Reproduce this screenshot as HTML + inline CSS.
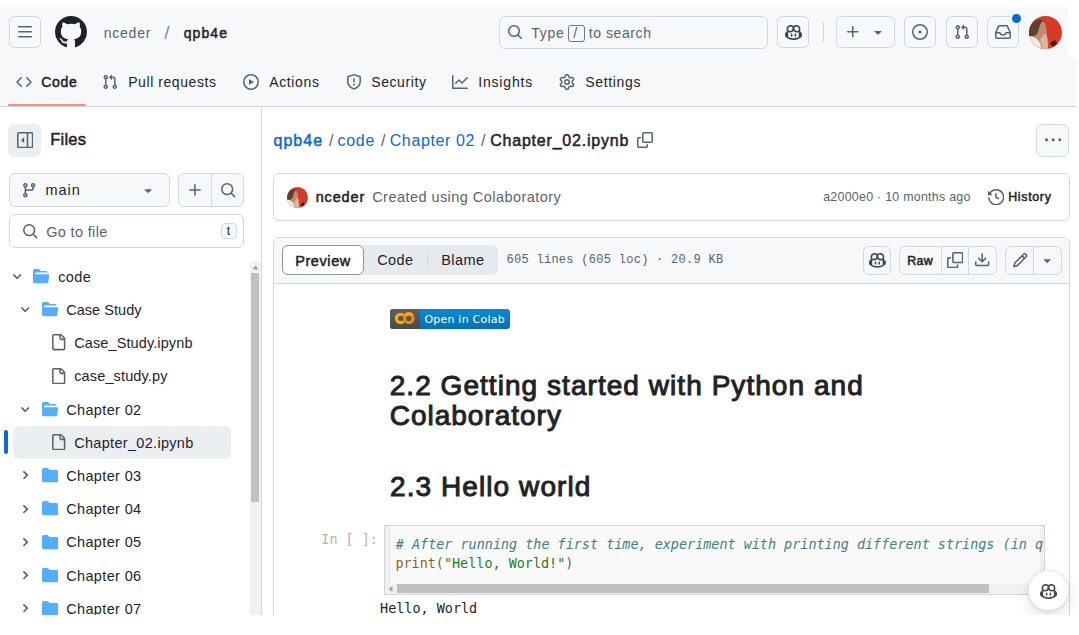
<!DOCTYPE html>
<html lang="en"><head><meta charset="utf-8"><title>qpb4e/code/Chapter 02/Chapter_02.ipynb at main · nceder/qpb4e</title>
<style>
html,body{margin:0;padding:0}body{width:1079px;height:635px;overflow:hidden;background:#fff;position:relative;font-family:"Liberation Sans",sans-serif}
.a{position:absolute;display:block}.t{white-space:pre}
</style></head>
<body>
<header>
<div class="a" style="left:0px;top:0px;width:1079px;height:106px;background:#f6f8fa;"></div>
<div class="a" style="left:0px;top:106px;width:1079px;height:1px;background:#d1d9e0;"></div>
<div class="a" style="left:8.5px;top:16px;width:32px;height:32px;border:1px solid #d1d9e0;border-radius:6px;box-sizing:border-box;"></div>
<svg class="a" style="left:16.5px;top:24px" width="16" height="16" viewBox="0 0 16 16" fill="#59636e"><path d="M1 2.75A.75.75 0 0 1 1.75 2h12.5a.75.75 0 0 1 0 1.5H1.75A.75.75 0 0 1 1 2.75Zm0 5A.75.75 0 0 1 1.75 7h12.5a.75.75 0 0 1 0 1.5H1.75A.75.75 0 0 1 1 7.75ZM1.75 12h12.5a.75.75 0 0 1 0 1.5H1.75a.75.75 0 0 1 0-1.5Z"/></svg>
<svg class="a" style="left:55px;top:16px" width="32" height="32" viewBox="0 0 16 16" fill="#1f2328"><path d="M8 0c4.42 0 8 3.58 8 8a8.013 8.013 0 0 1-5.45 7.59c-.4.08-.55-.17-.55-.38 0-.27.01-1.13.01-2.2 0-.75-.25-1.23-.54-1.48 1.78-.2 3.65-.88 3.65-3.95 0-.88-.31-1.59-.82-2.15.08-.2.36-1.02-.08-2.12 0 0-.67-.22-2.2.82-.64-.18-1.32-.27-2-.27-.68 0-1.36.09-2 .27-1.53-1.03-2.2-.82-2.2-.82-.44 1.1-.16 1.92-.08 2.12-.51.56-.82 1.28-.82 2.15 0 3.06 1.86 3.75 3.64 3.95-.23.2-.44.55-.51 1.07-.46.21-1.61.55-2.33-.66-.15-.24-.6-.83-1.23-.82-.67.01-.27.38.01.53.34.19.73.9.82 1.13.16.45.68 1.31 2.69.94 0 .67.01 1.3.01 1.49 0 .21-.15.45-.55.38A7.995 7.995 0 0 1 0 8c0-4.42 3.58-8 8-8Z"/></svg>
<span class="a t" style="left:103.7px;top:22.85px;font:400 14px/20px 'Liberation Sans', sans-serif;color:#59636e;letter-spacing:0.77px;">nceder</span>
<span class="a t" style="left:164.2px;top:19.52px;font:400 19px/25px 'Liberation Sans', sans-serif;color:#818b98;">/</span>
<span class="a t" style="left:183.7px;top:22.85px;font:400 14px/20px 'Liberation Sans', sans-serif;color:#1f2328;letter-spacing:1.09px;-webkit-text-stroke:0.5px #1f2328;">qpb4e</span>
<div class="a" style="left:499px;top:16px;width:269px;height:32.5px;border:1px solid #d1d9e0;border-radius:6px;box-sizing:border-box;"></div>
<svg class="a" style="left:507px;top:24px" width="16" height="16" viewBox="0 0 16 16" fill="#59636e"><path d="M10.68 11.74a6 6 0 0 1-7.922-8.982 6 6 0 0 1 8.982 7.922l3.04 3.04a.749.749 0 0 1-.326 1.275.749.749 0 0 1-.734-.215ZM11.5 7a4.499 4.499 0 1 0-8.997 0A4.499 4.499 0 0 0 11.5 7Z"/></svg>
<span class="a t" style="left:531.2px;top:22.65px;font:400 14px/20px 'Liberation Sans', sans-serif;color:#59636e;letter-spacing:0.76px;">Type</span>
<div class="a" style="left:568.3px;top:25.3px;width:17px;height:17px;border:1px solid #6e7781;border-radius:3px;box-sizing:border-box;"></div>
<span class="a t" style="left:573.3px;top:23.28px;font:400 14.5px/20px 'Liberation Sans', sans-serif;color:#59636e;">/</span>
<span class="a t" style="left:588.7px;top:22.65px;font:400 14px/20px 'Liberation Sans', sans-serif;color:#59636e;letter-spacing:0.59px;">to search</span>
<div class="a" style="left:776.5px;top:16px;width:32.5px;height:32px;border:1px solid #d1d9e0;border-radius:6px;box-sizing:border-box;"></div>
<svg class="a" style="left:785px;top:23.8px" width="17" height="17" viewBox="0 0 16 16" fill="#3d444d"><path d="M7.998 15.035c-4.562 0-7.873-2.914-7.998-3.749V9.338c.085-.628.677-1.686 1.588-2.065.013-.07.024-.143.036-.218.029-.183.06-.384.126-.612-.201-.508-.254-1.084-.254-1.656 0-.87.128-1.769.693-2.484.579-.733 1.494-1.124 2.724-1.261 1.206-.134 2.262.034 2.944.765.05.053.096.108.139.165.044-.057.094-.112.143-.165.682-.731 1.738-.899 2.944-.765 1.23.137 2.145.528 2.724 1.261.566.715.693 1.614.693 2.484 0 .572-.053 1.148-.254 1.656.066.228.098.429.126.612.012.076.024.148.037.218.924.385 1.522 1.471 1.591 2.095v1.872c0 .766-3.351 3.795-8.002 3.795Zm0-1.485c2.28 0 4.584-1.11 5.002-1.433V7.862l-.023-.116c-.49.21-1.075.291-1.727.291-1.146 0-2.059-.327-2.71-.991A3.222 3.222 0 0 1 8 6.303a3.24 3.24 0 0 1-.544.743c-.65.664-1.563.991-2.71.991-.652 0-1.236-.081-1.727-.291l-.023.116v4.255c.419.323 2.722 1.433 5.002 1.433ZM6.762 2.83c-.193-.206-.637-.413-1.682-.297-1.019.113-1.479.404-1.713.7-.247.312-.369.789-.369 1.554 0 .793.129 1.171.308 1.371.162.181.519.379 1.442.379.853 0 1.339-.235 1.638-.54.315-.322.527-.827.617-1.553.117-.935-.037-1.395-.241-1.614Zm4.155-.297c-1.044-.116-1.488.091-1.681.297-.204.219-.359.679-.242 1.614.091.726.303 1.231.618 1.553.299.305.784.54 1.638.54.922 0 1.28-.198 1.442-.379.179-.2.308-.578.308-1.371 0-.765-.123-1.242-.37-1.554-.233-.296-.693-.587-1.713-.7ZM6.25 9.037a.75.75 0 0 1 .75.75v1.501a.75.75 0 0 1-1.5 0V9.787a.75.75 0 0 1 .75-.75Zm4.25.75v1.501a.75.75 0 0 1-1.5 0V9.787a.75.75 0 0 1 1.5 0Z"/></svg>
<div class="a" style="left:822.5px;top:22px;width:1px;height:20px;background:#d1d9e0;"></div>
<div class="a" style="left:836px;top:16px;width:59px;height:32px;border:1px solid #d1d9e0;border-radius:6px;box-sizing:border-box;"></div>
<svg class="a" style="left:845px;top:24px" width="16" height="16" viewBox="0 0 16 16" fill="#59636e"><path d="M7.75 2a.75.75 0 0 1 .75.75V7h4.25a.75.75 0 0 1 0 1.5H8.5v4.25a.75.75 0 0 1-1.5 0V8.5H2.75a.75.75 0 0 1 0-1.5H7V2.75A.75.75 0 0 1 7.75 2Z"/></svg>
<svg class="a" style="left:870px;top:24.2px" width="16" height="16" viewBox="0 0 16 16" fill="#59636e"><path d="m4.427 7.427 3.396 3.396a.25.25 0 0 0 .354 0l3.396-3.396A.25.25 0 0 0 11.396 7H4.604a.25.25 0 0 0-.177.427Z"/></svg>
<div class="a" style="left:904px;top:16px;width:32px;height:32px;border:1px solid #d1d9e0;border-radius:6px;box-sizing:border-box;"></div>
<svg class="a" style="left:912px;top:24px" width="16" height="16" viewBox="0 0 16 16" fill="#59636e"><path d="M8 9.5a1.5 1.5 0 1 0 0-3 1.5 1.5 0 0 0 0 3ZM8 0a8 8 0 1 1 0 16A8 8 0 0 1 8 0ZM1.5 8a6.5 6.5 0 1 0 13 0 6.5 6.5 0 0 0-13 0Z"/></svg>
<div class="a" style="left:945.5px;top:16px;width:32px;height:32px;border:1px solid #d1d9e0;border-radius:6px;box-sizing:border-box;"></div>
<svg class="a" style="left:953.5px;top:24px" width="16" height="16" viewBox="0 0 16 16" fill="#59636e"><path d="M1.5 3.25a2.25 2.25 0 1 1 3 2.122v5.256a2.251 2.251 0 1 1-1.5 0V5.372A2.25 2.25 0 0 1 1.5 3.25Zm5.677-.177L9.573.677A.25.25 0 0 1 10 .854V2.5h1A2.5 2.5 0 0 1 13.5 5v5.628a2.251 2.251 0 1 1-1.5 0V5a1 1 0 0 0-1-1h-1v1.646a.25.25 0 0 1-.427.177L7.177 3.427a.25.25 0 0 1 0-.354ZM3.75 2.5a.75.75 0 1 0 0 1.5.75.75 0 0 0 0-1.5Zm0 9.5a.75.75 0 1 0 0 1.5.75.75 0 0 0 0-1.5Zm8.25.75a.75.75 0 1 0 1.5 0 .75.75 0 0 0-1.5 0Z"/></svg>
<div class="a" style="left:987px;top:16px;width:32px;height:32px;border:1px solid #d1d9e0;border-radius:6px;box-sizing:border-box;"></div>
<svg class="a" style="left:995px;top:24px" width="16" height="16" viewBox="0 0 16 16" fill="#59636e"><path d="M2.8 2.06A1.75 1.75 0 0 1 4.41 1h7.18c.7 0 1.333.417 1.61 1.06l2.74 6.395c.04.093.06.194.06.295v4.5A1.75 1.75 0 0 1 14.25 15H1.75A1.75 1.75 0 0 1 0 13.25v-4.5c0-.101.02-.202.06-.295Zm1.61.44a.25.25 0 0 0-.23.152L1.887 8H4.75a.75.75 0 0 1 .6.3L6.625 10h2.75l1.275-1.7a.75.75 0 0 1 .6-.3h2.863L11.82 2.652a.25.25 0 0 0-.23-.152Zm10.09 7h-2.875l-1.275 1.7a.75.75 0 0 1-.6.3h-3.5a.75.75 0 0 1-.6-.3L4.375 9.5H1.5v3.75c0 .138.112.25.25.25h12.5a.25.25 0 0 0 .25-.25Z"/></svg>
<div class="a" style="left:1012.3px;top:14.4px;width:9px;height:9px;background:#0969da;border-radius:50%;box-shadow:0 0 0 1.5px #f6f8fa;"></div>
<svg class="a" style="left:1029px;top:15.5px" width="33" height="33" viewBox="0 0 33 33"><defs><clipPath id="av"><circle cx="16.5" cy="16.5" r="16.5"/></clipPath></defs><g clip-path="url(#av)"><rect width="33" height="33" fill="#d63a28"/><path d="M7 6C11 3 16 5 17 11C18 15 17 19 19 23C20 27 19 31 18 33H5C3 27 2 20 3 13Z" fill="#be8a73"/><path d="M0 12C3 5 9 2 14 4C11 8 10 12 9 16C8 19 5 21 0 20Z" fill="#5e3f30"/><path d="M0 20C5 20 9 23 11 27C12 30 12 32 12 33H0Z" fill="#efeae4"/><path d="M11 24C13 20 15 18 17 17C18 22 19 28 19 33H13C13 30 12 27 11 24Z" fill="#e0b49d"/><path d="M21 27L26 24L28 28L24 31Z" fill="#4a1a14"/></g></svg>
<nav>
<svg class="a" style="left:16px;top:74px" width="16" height="16" viewBox="0 0 16 16" fill="#59636e"><path d="m11.28 3.22 4.25 4.25a.75.75 0 0 1 0 1.06l-4.25 4.25a.749.749 0 0 1-1.275-.326.749.749 0 0 1 .215-.734L13.94 8l-3.72-3.72a.749.749 0 0 1 .326-1.275.749.749 0 0 1 .734.215Zm-6.56 0a.751.751 0 0 1 1.042.018.751.751 0 0 1 .018 1.042L2.06 8l3.72 3.72a.749.749 0 0 1-.326 1.275.749.749 0 0 1-.734-.215L.47 8.53a.75.75 0 0 1 0-1.06Z"/></svg>
<span class="a t" style="left:41.2px;top:72.15px;font:400 14px/20px 'Liberation Sans', sans-serif;color:#1f2328;letter-spacing:0.73px;-webkit-text-stroke:0.5px #1f2328;">Code</span>
<div class="a" style="left:8px;top:103.7px;width:77.5px;height:2.3px;background:#fd8c73;border-radius:2px;"></div>
<svg class="a" style="left:102px;top:74px" width="16" height="16" viewBox="0 0 16 16" fill="#59636e"><path d="M1.5 3.25a2.25 2.25 0 1 1 3 2.122v5.256a2.251 2.251 0 1 1-1.5 0V5.372A2.25 2.25 0 0 1 1.5 3.25Zm5.677-.177L9.573.677A.25.25 0 0 1 10 .854V2.5h1A2.5 2.5 0 0 1 13.5 5v5.628a2.251 2.251 0 1 1-1.5 0V5a1 1 0 0 0-1-1h-1v1.646a.25.25 0 0 1-.427.177L7.177 3.427a.25.25 0 0 1 0-.354ZM3.75 2.5a.75.75 0 1 0 0 1.5.75.75 0 0 0 0-1.5Zm0 9.5a.75.75 0 1 0 0 1.5.75.75 0 0 0 0-1.5Zm8.25.75a.75.75 0 1 0 1.5 0 .75.75 0 0 0-1.5 0Z"/></svg>
<span class="a t" style="left:128.2px;top:72.15px;font:400 14px/20px 'Liberation Sans', sans-serif;color:#1f2328;letter-spacing:0.57px;">Pull requests</span>
<svg class="a" style="left:243px;top:74px" width="16" height="16" viewBox="0 0 16 16" fill="#59636e"><path d="M8 0a8 8 0 1 1 0 16A8 8 0 0 1 8 0ZM1.5 8a6.5 6.5 0 1 0 13 0 6.5 6.5 0 0 0-13 0Zm4.879-2.773 4.264 2.559a.25.25 0 0 1 0 .428l-4.264 2.559A.25.25 0 0 1 6 10.559V5.442a.25.25 0 0 1 .379-.215Z"/></svg>
<span class="a t" style="left:269.2px;top:72.15px;font:400 14px/20px 'Liberation Sans', sans-serif;color:#1f2328;letter-spacing:0.64px;">Actions</span>
<svg class="a" style="left:346px;top:74px" width="16" height="16" viewBox="0 0 16 16" fill="#59636e"><path d="M7.467.133a1.748 1.748 0 0 1 1.066 0l5.25 1.68A1.75 1.75 0 0 1 15 3.48V7c0 1.566-.32 3.182-1.303 4.682-.983 1.498-2.585 2.813-5.032 3.855a1.697 1.697 0 0 1-1.33 0c-2.447-1.042-4.049-2.357-5.032-3.855C1.32 10.182 1 8.566 1 7V3.48a1.75 1.75 0 0 1 1.217-1.667Zm.61 1.429a.25.25 0 0 0-.153 0l-5.25 1.68a.25.25 0 0 0-.174.238V7c0 1.358.275 2.666 1.057 3.86.784 1.194 2.121 2.34 4.366 3.297a.196.196 0 0 0 .154 0c2.245-.956 3.582-2.104 4.366-3.298C13.225 9.666 13.5 8.36 13.5 7V3.48a.251.251 0 0 0-.174-.237l-5.25-1.68ZM8.75 4.75v3a.75.75 0 0 1-1.5 0v-3a.75.75 0 0 1 1.5 0ZM9 10.5a1 1 0 1 1-2 0 1 1 0 0 1 2 0Z"/></svg>
<span class="a t" style="left:371.2px;top:72.15px;font:400 14px/20px 'Liberation Sans', sans-serif;color:#1f2328;letter-spacing:0.6px;">Security</span>
<svg class="a" style="left:452px;top:74px" width="16" height="16" viewBox="0 0 16 16" fill="#59636e"><path d="M1.5 1.75V13.5h13.75a.75.75 0 0 1 0 1.5H.75a.75.75 0 0 1-.75-.75V1.75a.75.75 0 0 1 1.5 0Zm14.28 2.53-5.25 5.25a.75.75 0 0 1-1.06 0L7 7.06 4.28 9.78a.751.751 0 0 1-1.042-.018.751.751 0 0 1-.018-1.042l3.25-3.25a.75.75 0 0 1 1.06 0L10 7.94l4.72-4.72a.751.751 0 0 1 1.042.018.751.751 0 0 1 .018 1.042Z"/></svg>
<span class="a t" style="left:478.2px;top:72.15px;font:400 14px/20px 'Liberation Sans', sans-serif;color:#1f2328;letter-spacing:0.83px;">Insights</span>
<svg class="a" style="left:559px;top:74px" width="16" height="16" viewBox="0 0 16 16" fill="#59636e"><path d="M8 0a8.2 8.2 0 0 1 .701.031C9.444.095 9.99.645 10.16 1.29l.288 1.107c.018.066.079.158.212.224.231.114.454.243.668.386.123.082.233.09.299.071l1.103-.303c.644-.176 1.392.021 1.82.63.27.385.506.792.704 1.218.315.675.111 1.422-.364 1.891l-.814.806c-.049.048-.098.147-.088.294.016.257.016.515 0 .772-.01.147.038.246.088.294l.814.806c.475.469.679 1.216.364 1.891a7.977 7.977 0 0 1-.704 1.217c-.428.61-1.176.807-1.82.63l-1.102-.302c-.067-.019-.177-.011-.3.071a5.909 5.909 0 0 1-.668.386c-.133.066-.194.158-.211.224l-.29 1.106c-.168.646-.715 1.196-1.458 1.26a8.006 8.006 0 0 1-1.402 0c-.743-.064-1.289-.614-1.458-1.26l-.289-1.106c-.018-.066-.079-.158-.212-.224a5.738 5.738 0 0 1-.668-.386c-.123-.082-.233-.09-.299-.071l-1.103.303c-.644.176-1.392-.021-1.82-.63a8.12 8.12 0 0 1-.704-1.218c-.315-.675-.111-1.422.363-1.891l.815-.806c.05-.048.098-.147.088-.294a6.214 6.214 0 0 1 0-.772c.01-.147-.038-.246-.088-.294l-.815-.806C.635 6.045.431 5.298.746 4.623a7.92 7.92 0 0 1 .704-1.217c.428-.61 1.176-.807 1.82-.63l1.102.302c.067.019.177.011.3-.071.214-.143.437-.272.668-.386.133-.066.194-.158.211-.224l.29-1.106C6.009.645 6.556.095 7.299.03 7.53.01 7.764 0 8 0Zm-.571 1.525c-.036.003-.108.036-.137.146l-.289 1.105c-.147.561-.549.967-.998 1.189-.173.086-.34.183-.5.29-.417.278-.97.423-1.529.27l-1.103-.303c-.109-.03-.175.016-.195.045-.22.312-.412.644-.573.99-.014.031-.021.11.059.19l.815.806c.411.406.562.957.53 1.456a4.709 4.709 0 0 0 0 .582c.032.499-.119 1.05-.53 1.456l-.815.806c-.081.08-.073.159-.059.19.162.346.353.677.573.989.02.03.085.076.195.046l1.102-.303c.56-.153 1.113-.008 1.53.27.161.107.328.204.501.29.447.222.85.629.997 1.189l.289 1.105c.029.109.101.143.137.146a6.6 6.6 0 0 0 1.142 0c.036-.003.108-.036.137-.146l.289-1.105c.147-.561.549-.967.998-1.189.173-.086.34-.183.5-.29.417-.278.97-.423 1.529-.27l1.103.303c.109.029.175-.016.195-.045.22-.313.411-.644.573-.99.014-.031.021-.11-.059-.19l-.815-.806c-.411-.406-.562-.957-.53-1.456a4.709 4.709 0 0 0 0-.582c-.032-.499.119-1.05.53-1.456l.815-.806c.081-.08.073-.159.059-.19a6.464 6.464 0 0 0-.573-.989c-.02-.03-.085-.076-.195-.046l-1.102.303c-.56.153-1.113.008-1.53-.27a4.44 4.44 0 0 0-.501-.29c-.447-.222-.85-.629-.997-1.189l-.289-1.105c-.029-.11-.101-.143-.137-.146a6.6 6.6 0 0 0-1.142 0ZM11 8a3 3 0 1 1-6 0 3 3 0 0 1 6 0ZM9.5 8a1.5 1.5 0 1 0-3.001.001A1.5 1.5 0 0 0 9.5 8Z"/></svg>
<span class="a t" style="left:585.2px;top:72.15px;font:400 14px/20px 'Liberation Sans', sans-serif;color:#1f2328;letter-spacing:0.66px;">Settings</span>
</nav>
</header>
<aside>
<div class="a" style="left:261px;top:107px;width:1px;height:520px;background:#d1d9e0;"></div>
<div class="a" style="left:8.3px;top:123.5px;width:32.5px;height:33px;background:#eceff2;border-radius:6px;"></div>
<svg class="a" style="left:16.5px;top:131.8px" width="16.4" height="16.4" viewBox="0 0 16 16" fill="#59636e"><path d="m4.177 7.823 2.396-2.396A.25.25 0 0 1 7 5.604v4.792a.25.25 0 0 1-.427.177L4.177 8.177a.25.25 0 0 1 0-.354ZM0 1.75C0 .784.784 0 1.75 0h12.5C15.216 0 16 .784 16 1.75v12.5A1.75 1.75 0 0 1 14.25 16H1.75A1.75 1.75 0 0 1 0 14.25Zm1.75-.25a.25.25 0 0 0-.25.25v12.5c0 .138.112.25.25.25H9.5v-13Zm12.5 13a.25.25 0 0 0 .25-.25V1.75a.25.25 0 0 0-.25-.25H11v13Z"/></svg>
<span class="a t" style="left:50.2px;top:129.38px;font:400 16.5px/21px 'Liberation Sans', sans-serif;color:#1f2328;letter-spacing:0.25px;-webkit-text-stroke:0.5px #1f2328;">Files</span>
<div class="a" style="left:8.7px;top:173px;width:161.5px;height:33.6px;background:#f6f8fa;border:1px solid #d1d9e0;border-radius:6px;box-sizing:border-box;"></div>
<svg class="a" style="left:21px;top:181.6px" width="16.4" height="16.4" viewBox="0 0 16 16" fill="#59636e"><path d="M9.5 3.25a2.25 2.25 0 1 1 3 2.122V6A2.5 2.5 0 0 1 10 8.5H6a1 1 0 0 0-1 1v1.128a2.251 2.251 0 1 1-1.5 0V5.372a2.25 2.25 0 1 1 1.5 0v1.836A2.493 2.493 0 0 1 6 7h4a1 1 0 0 0 1-1v-.628A2.25 2.25 0 0 1 9.5 3.25Zm-6 0a.75.75 0 1 0 1.5 0 .75.75 0 0 0-1.5 0Zm8.25-.75a.75.75 0 1 0 0 1.5.75.75 0 0 0 0-1.5ZM4.25 12a.75.75 0 1 0 0 1.5.75.75 0 0 0 0-1.5Z"/></svg>
<span class="a t" style="left:45.5px;top:180.28px;font:400 14.5px/20px 'Liberation Sans', sans-serif;color:#1f2328;letter-spacing:0.99px;">main</span>
<svg class="a" style="left:140px;top:181.8px" width="16.4" height="16.4" viewBox="0 0 16 16" fill="#59636e"><path d="m4.427 7.427 3.396 3.396a.25.25 0 0 0 .354 0l3.396-3.396A.25.25 0 0 0 11.396 7H4.604a.25.25 0 0 0-.177.427Z"/></svg>
<div class="a" style="left:178px;top:173px;width:66.2px;height:33.6px;background:#f6f8fa;border:1px solid #d1d9e0;border-radius:6px;box-sizing:border-box;"></div>
<div class="a" style="left:210.5px;top:174px;width:1px;height:31.6px;background:#d1d9e0;"></div>
<svg class="a" style="left:187px;top:181.8px" width="16.4" height="16.4" viewBox="0 0 16 16" fill="#59636e"><path d="M7.75 2a.75.75 0 0 1 .75.75V7h4.25a.75.75 0 0 1 0 1.5H8.5v4.25a.75.75 0 0 1-1.5 0V8.5H2.75a.75.75 0 0 1 0-1.5H7V2.75A.75.75 0 0 1 7.75 2Z"/></svg>
<svg class="a" style="left:219.5px;top:181.8px" width="16.4" height="16.4" viewBox="0 0 16 16" fill="#59636e"><path d="M10.68 11.74a6 6 0 0 1-7.922-8.982 6 6 0 0 1 8.982 7.922l3.04 3.04a.749.749 0 0 1-.326 1.275.749.749 0 0 1-.734-.215ZM11.5 7a4.499 4.499 0 1 0-8.997 0A4.499 4.499 0 0 0 11.5 7Z"/></svg>
<div class="a" style="left:8.7px;top:214.4px;width:235.5px;height:33.2px;border:1px solid #d1d9e0;border-radius:6px;box-sizing:border-box;"></div>
<svg class="a" style="left:21.8px;top:222.8px" width="16.4" height="16.4" viewBox="0 0 16 16" fill="#59636e"><path d="M10.68 11.74a6 6 0 0 1-7.922-8.982 6 6 0 0 1 8.982 7.922l3.04 3.04a.749.749 0 0 1-.326 1.275.749.749 0 0 1-.734-.215ZM11.5 7a4.499 4.499 0 1 0-8.997 0A4.499 4.499 0 0 0 11.5 7Z"/></svg>
<span class="a t" style="left:46.2px;top:221.58px;font:400 14.5px/20px 'Liberation Sans', sans-serif;color:#59636e;letter-spacing:0.34px;">Go to file</span>
<div class="a" style="left:220.8px;top:222.8px;width:16.5px;height:16.5px;background:#f6f8fa;border:1px solid #d1d9e0;border-radius:4px;box-sizing:border-box;"></div>
<span class="a t" style="left:226.7px;top:221.34px;font:400 12px/20px 'Liberation Sans', sans-serif;color:#1f2328;">t</span>
<div class="a" style="left:250px;top:262px;width:11px;height:360px;background:#f1f1f1;"></div>
<svg class="a" style="left:250px;top:262px" width="11" height="11" viewBox="0 0 11 11"><path d="M5.5 3.5 8.5 7.5H2.5Z" fill="#a3a3a3"/></svg>
<div class="a" style="left:251px;top:273px;width:8px;height:229px;background:#c1c1c1;"></div>
<svg class="a" style="left:11px;top:270.2px" width="12.4" height="12.4" viewBox="0 0 12 12" fill="#59636e"><path d="M6 8.825c-.2 0-.4-.1-.5-.2l-3.3-3.3c-.3-.3-.3-.8 0-1.1.3-.3.8-.3 1.1 0l2.700 2.7 2.700-2.7c.3-.3.8-.3 1.1 0 .3.3.3.8 0 1.1l-3.200 3.200c-.2.200-.4.300-.6.300Z"/></svg>
<svg class="a" style="left:33.1px;top:268px" width="16.4" height="16.4" viewBox="0 0 16 16" fill="#54aeff"><path d="M.513 1.513A1.75 1.75 0 0 1 1.75 1h3.5c.55 0 1.07.26 1.4.7l.9 1.2a.25.25 0 0 0 .2.1H13a1 1 0 0 1 1 1v.5H2.75a.75.75 0 0 0 0 1.5h11.978a1 1 0 0 1 .994 1.117L15 13.25A1.75 1.75 0 0 1 13.25 15H1.75A1.75 1.75 0 0 1 0 13.25V2.75c0-.464.184-.91.513-1.237Z"/></svg>
<span class="a t" style="left:58.2px;top:266.78px;font:400 14.5px/20px 'Liberation Sans', sans-serif;color:#1f2328;letter-spacing:0.36px;">code</span>
<svg class="a" style="left:19px;top:303.4px" width="12.4" height="12.4" viewBox="0 0 12 12" fill="#59636e"><path d="M6 8.825c-.2 0-.4-.1-.5-.2l-3.3-3.3c-.3-.3-.3-.8 0-1.1.3-.3.8-.3 1.1 0l2.700 2.7 2.700-2.7c.3-.3.8-.3 1.1 0 .3.3.3.8 0 1.1l-3.200 3.200c-.2.200-.4.300-.6.300Z"/></svg>
<svg class="a" style="left:42px;top:301.2px" width="16.4" height="16.4" viewBox="0 0 16 16" fill="#54aeff"><path d="M.513 1.513A1.75 1.75 0 0 1 1.75 1h3.5c.55 0 1.07.26 1.4.7l.9 1.2a.25.25 0 0 0 .2.1H13a1 1 0 0 1 1 1v.5H2.75a.75.75 0 0 0 0 1.5h11.978a1 1 0 0 1 .994 1.117L15 13.25A1.75 1.75 0 0 1 13.25 15H1.75A1.75 1.75 0 0 1 0 13.25V2.75c0-.464.184-.91.513-1.237Z"/></svg>
<span class="a t" style="left:66.2px;top:299.98px;font:400 14.5px/20px 'Liberation Sans', sans-serif;color:#1f2328;letter-spacing:0.04px;">Case Study</span>
<svg class="a" style="left:50.3px;top:334.4px" width="16.4" height="16.4" viewBox="0 0 16 16" fill="#59636e"><path d="M2 1.75C2 .784 2.784 0 3.75 0h6.586c.464 0 .909.184 1.237.513l2.914 2.914c.329.328.513.773.513 1.237v9.586A1.75 1.75 0 0 1 13.25 16h-9.5A1.75 1.75 0 0 1 2 14.25Zm1.75-.25a.25.25 0 0 0-.25.25v12.5c0 .138.112.25.25.25h9.5a.25.25 0 0 0 .25-.25V6h-2.75A1.75 1.75 0 0 1 9 4.25V1.5Zm6.75.062V4.25c0 .138.112.25.25.25h2.688l-.011-.013-2.914-2.914-.013-.011Z"/></svg>
<span class="a t" style="left:74.2px;top:333.18px;font:400 14.5px/20px 'Liberation Sans', sans-serif;color:#1f2328;letter-spacing:0.11px;">Case_Study.ipynb</span>
<svg class="a" style="left:50.3px;top:367.6px" width="16.4" height="16.4" viewBox="0 0 16 16" fill="#59636e"><path d="M2 1.75C2 .784 2.784 0 3.75 0h6.586c.464 0 .909.184 1.237.513l2.914 2.914c.329.328.513.773.513 1.237v9.586A1.75 1.75 0 0 1 13.25 16h-9.5A1.75 1.75 0 0 1 2 14.25Zm1.75-.25a.25.25 0 0 0-.25.25v12.5c0 .138.112.25.25.25h9.5a.25.25 0 0 0 .25-.25V6h-2.75A1.75 1.75 0 0 1 9 4.25V1.5Zm6.75.062V4.25c0 .138.112.25.25.25h2.688l-.011-.013-2.914-2.914-.013-.011Z"/></svg>
<span class="a t" style="left:74.2px;top:366.38px;font:400 14.5px/20px 'Liberation Sans', sans-serif;color:#1f2328;letter-spacing:0.14px;">case_study.py</span>
<svg class="a" style="left:19px;top:403px" width="12.4" height="12.4" viewBox="0 0 12 12" fill="#59636e"><path d="M6 8.825c-.2 0-.4-.1-.5-.2l-3.3-3.3c-.3-.3-.3-.8 0-1.1.3-.3.8-.3 1.1 0l2.700 2.7 2.700-2.7c.3-.3.8-.3 1.1 0 .3.3.3.8 0 1.1l-3.200 3.200c-.2.200-.4.300-.6.300Z"/></svg>
<svg class="a" style="left:42px;top:400.8px" width="16.4" height="16.4" viewBox="0 0 16 16" fill="#54aeff"><path d="M.513 1.513A1.75 1.75 0 0 1 1.75 1h3.5c.55 0 1.07.26 1.4.7l.9 1.2a.25.25 0 0 0 .2.1H13a1 1 0 0 1 1 1v.5H2.75a.75.75 0 0 0 0 1.5h11.978a1 1 0 0 1 .994 1.117L15 13.25A1.75 1.75 0 0 1 13.25 15H1.75A1.75 1.75 0 0 1 0 13.25V2.75c0-.464.184-.91.513-1.237Z"/></svg>
<span class="a t" style="left:66.2px;top:399.58px;font:400 14.5px/20px 'Liberation Sans', sans-serif;color:#1f2328;letter-spacing:0.36px;">Chapter 02</span>
<div class="a" style="left:13.2px;top:425.7px;width:218.3px;height:33px;background:#eceff2;border-radius:6px;"></div>
<div class="a" style="left:4px;top:430.2px;width:4px;height:24px;background:#0969da;border-radius:2px;"></div>
<svg class="a" style="left:50.3px;top:434px" width="16.4" height="16.4" viewBox="0 0 16 16" fill="#59636e"><path d="M2 1.75C2 .784 2.784 0 3.75 0h6.586c.464 0 .909.184 1.237.513l2.914 2.914c.329.328.513.773.513 1.237v9.586A1.75 1.75 0 0 1 13.25 16h-9.5A1.75 1.75 0 0 1 2 14.25Zm1.75-.25a.25.25 0 0 0-.25.25v12.5c0 .138.112.25.25.25h9.5a.25.25 0 0 0 .25-.25V6h-2.75A1.75 1.75 0 0 1 9 4.25V1.5Zm6.75.062V4.25c0 .138.112.25.25.25h2.688l-.011-.013-2.914-2.914-.013-.011Z"/></svg>
<span class="a t" style="left:74.2px;top:432.78px;font:400 14.5px/20px 'Liberation Sans', sans-serif;color:#1f2328;letter-spacing:0.31px;">Chapter_02.ipynb</span>
<svg class="a" style="left:19px;top:469.4px" width="12.4" height="12.4" viewBox="0 0 12 12" fill="#59636e"><path d="M4.700 10c-.2 0-.4-.1-.5-.2-.3-.3-.3-.8 0-1.100L6.900 6 4.200 3.300c-.3-.3-.3-.8 0-1.100.3-.3.8-.3 1.100 0l3.300 3.200c.3.300.3.800 0 1.100l-3.300 3.200c-.2.200-.4.300-.6.300Z"/></svg>
<svg class="a" style="left:42px;top:467.2px" width="16.4" height="16.4" viewBox="0 0 16 16" fill="#54aeff"><path d="M1.75 1A1.75 1.75 0 0 0 0 2.75v10.5C0 14.216.784 15 1.75 15h12.5A1.75 1.75 0 0 0 16 13.25v-8.5A1.75 1.75 0 0 0 14.25 3H7.5a.25.25 0 0 1-.2-.1l-.9-1.2C6.07 1.26 5.55 1 5 1H1.75Z"/></svg>
<span class="a t" style="left:66.2px;top:465.98px;font:400 14.5px/20px 'Liberation Sans', sans-serif;color:#1f2328;letter-spacing:0.36px;">Chapter 03</span>
<svg class="a" style="left:19px;top:502.6px" width="12.4" height="12.4" viewBox="0 0 12 12" fill="#59636e"><path d="M4.700 10c-.2 0-.4-.1-.5-.2-.3-.3-.3-.8 0-1.100L6.900 6 4.200 3.300c-.3-.3-.3-.8 0-1.100.3-.3.8-.3 1.100 0l3.300 3.200c.3.300.3.800 0 1.100l-3.300 3.200c-.2.200-.4.300-.6.300Z"/></svg>
<svg class="a" style="left:42px;top:500.4px" width="16.4" height="16.4" viewBox="0 0 16 16" fill="#54aeff"><path d="M1.75 1A1.75 1.75 0 0 0 0 2.75v10.5C0 14.216.784 15 1.75 15h12.5A1.75 1.75 0 0 0 16 13.25v-8.5A1.75 1.75 0 0 0 14.25 3H7.5a.25.25 0 0 1-.2-.1l-.9-1.2C6.07 1.26 5.55 1 5 1H1.75Z"/></svg>
<span class="a t" style="left:66.2px;top:499.18px;font:400 14.5px/20px 'Liberation Sans', sans-serif;color:#1f2328;letter-spacing:0.36px;">Chapter 04</span>
<svg class="a" style="left:19px;top:535.8px" width="12.4" height="12.4" viewBox="0 0 12 12" fill="#59636e"><path d="M4.700 10c-.2 0-.4-.1-.5-.2-.3-.3-.3-.8 0-1.100L6.900 6 4.200 3.300c-.3-.3-.3-.8 0-1.100.3-.3.8-.3 1.100 0l3.300 3.200c.3.300.3.800 0 1.100l-3.300 3.200c-.2.200-.4.300-.6.300Z"/></svg>
<svg class="a" style="left:42px;top:533.6px" width="16.4" height="16.4" viewBox="0 0 16 16" fill="#54aeff"><path d="M1.75 1A1.75 1.75 0 0 0 0 2.75v10.5C0 14.216.784 15 1.75 15h12.5A1.75 1.75 0 0 0 16 13.25v-8.5A1.75 1.75 0 0 0 14.25 3H7.5a.25.25 0 0 1-.2-.1l-.9-1.2C6.07 1.26 5.55 1 5 1H1.75Z"/></svg>
<span class="a t" style="left:66.2px;top:532.38px;font:400 14.5px/20px 'Liberation Sans', sans-serif;color:#1f2328;letter-spacing:0.36px;">Chapter 05</span>
<svg class="a" style="left:19px;top:569px" width="12.4" height="12.4" viewBox="0 0 12 12" fill="#59636e"><path d="M4.700 10c-.2 0-.4-.1-.5-.2-.3-.3-.3-.8 0-1.100L6.900 6 4.200 3.300c-.3-.3-.3-.8 0-1.100.3-.3.8-.3 1.100 0l3.300 3.200c.3.300.3.800 0 1.100l-3.300 3.200c-.2.200-.4.300-.6.300Z"/></svg>
<svg class="a" style="left:42px;top:566.8px" width="16.4" height="16.4" viewBox="0 0 16 16" fill="#54aeff"><path d="M1.75 1A1.75 1.75 0 0 0 0 2.75v10.5C0 14.216.784 15 1.75 15h12.5A1.75 1.75 0 0 0 16 13.25v-8.5A1.75 1.75 0 0 0 14.25 3H7.5a.25.25 0 0 1-.2-.1l-.9-1.2C6.07 1.26 5.55 1 5 1H1.75Z"/></svg>
<span class="a t" style="left:66.2px;top:565.58px;font:400 14.5px/20px 'Liberation Sans', sans-serif;color:#1f2328;letter-spacing:0.36px;">Chapter 06</span>
<svg class="a" style="left:19px;top:602.2px" width="12.4" height="12.4" viewBox="0 0 12 12" fill="#59636e"><path d="M4.700 10c-.2 0-.4-.1-.5-.2-.3-.3-.3-.8 0-1.100L6.900 6 4.200 3.300c-.3-.3-.3-.8 0-1.100.3-.3.8-.3 1.100 0l3.300 3.200c.3.300.3.800 0 1.100l-3.300 3.200c-.2.200-.4.300-.6.300Z"/></svg>
<svg class="a" style="left:42px;top:600px" width="16.4" height="16.4" viewBox="0 0 16 16" fill="#54aeff"><path d="M1.75 1A1.75 1.75 0 0 0 0 2.75v10.5C0 14.216.784 15 1.75 15h12.5A1.75 1.75 0 0 0 16 13.25v-8.5A1.75 1.75 0 0 0 14.25 3H7.5a.25.25 0 0 1-.2-.1l-.9-1.2C6.07 1.26 5.55 1 5 1H1.75Z"/></svg>
<span class="a t" style="left:66.2px;top:598.78px;font:400 14.5px/20px 'Liberation Sans', sans-serif;color:#1f2328;letter-spacing:0.36px;">Chapter 07</span>
</aside>
<main>
<span class="a t" style="left:273.5px;top:130.76px;font:400 16px/20px 'Liberation Sans', sans-serif;color:#0969da;letter-spacing:1.02px;-webkit-text-stroke:0.5px #0969da;">qpb4e</span>
<span class="a t" style="left:329px;top:130.76px;font:400 16px/20px 'Liberation Sans', sans-serif;color:#59636e;">/</span>
<span class="a t" style="left:337.6px;top:130.76px;font:400 16px/20px 'Liberation Sans', sans-serif;color:#0969da;letter-spacing:0.67px;">code</span>
<span class="a t" style="left:381px;top:130.76px;font:400 16px/20px 'Liberation Sans', sans-serif;color:#59636e;">/</span>
<span class="a t" style="left:389.7px;top:130.76px;font:400 16px/20px 'Liberation Sans', sans-serif;color:#0969da;letter-spacing:0.62px;">Chapter 02</span>
<span class="a t" style="left:481px;top:130.76px;font:400 16px/20px 'Liberation Sans', sans-serif;color:#59636e;">/</span>
<span class="a t" style="left:490.2px;top:130.76px;font:400 16px/20px 'Liberation Sans', sans-serif;color:#1f2328;letter-spacing:0.79px;-webkit-text-stroke:0.5px #1f2328;">Chapter_02.ipynb</span>
<svg class="a" style="left:636.5px;top:132px" width="16" height="16" viewBox="0 0 16 16" fill="#59636e"><path d="M0 6.75C0 5.784.784 5 1.75 5h1.5a.75.75 0 0 1 0 1.5h-1.5a.25.25 0 0 0-.25.25v7.5c0 .138.112.25.25.25h7.5a.25.25 0 0 0 .25-.25v-1.5a.75.75 0 0 1 1.5 0v1.5A1.75 1.75 0 0 1 9.25 16h-7.5A1.75 1.75 0 0 1 0 14.25ZM5 1.75C5 .784 5.784 0 6.75 0h7.5C15.216 0 16 .784 16 1.75v7.5A1.75 1.75 0 0 1 14.25 11h-7.5A1.75 1.75 0 0 1 5 9.25Zm1.75-.25a.25.25 0 0 0-.25.25v7.5c0 .138.112.25.25.25h7.5a.25.25 0 0 0 .25-.25v-7.5a.25.25 0 0 0-.25-.25Z"/></svg>
<div class="a" style="left:1036.3px;top:123.5px;width:33px;height:33px;background:#f6f8fa;border:1px solid #d1d9e0;border-radius:6px;box-sizing:border-box;"></div>
<svg class="a" style="left:1044.6px;top:131.8px" width="16.4" height="16.4" viewBox="0 0 16 16" fill="#59636e"><path d="M8 9a1.5 1.5 0 1 0 0-3 1.5 1.5 0 0 0 0 3ZM1.5 9a1.5 1.5 0 1 0 0-3 1.5 1.5 0 0 0 0 3Zm13 0a1.5 1.5 0 1 0 0-3 1.5 1.5 0 0 0 0 3Z"/></svg>
<div class="a" style="left:273px;top:173px;width:796.5px;height:47.5px;border:1px solid #d1d9e0;border-radius:6px;box-sizing:border-box;"></div>
<svg class="a" style="left:287.4px;top:187px" width="21" height="21" viewBox="0 0 33 33"><g clip-path="url(#av)"><rect width="33" height="33" fill="#d63a28"/><path d="M7 6C11 3 16 5 17 11C18 15 17 19 19 23C20 27 19 31 18 33H5C3 27 2 20 3 13Z" fill="#be8a73"/><path d="M0 12C3 5 9 2 14 4C11 8 10 12 9 16C8 19 5 21 0 20Z" fill="#5e3f30"/><path d="M0 20C5 20 9 23 11 27C12 30 12 32 12 33H0Z" fill="#efeae4"/><path d="M11 24C13 20 15 18 17 17C18 22 19 28 19 33H13C13 30 12 27 11 24Z" fill="#e0b49d"/><path d="M21 27L26 24L28 28L24 31Z" fill="#4a1a14"/></g></svg>
<span class="a t" style="left:315.7px;top:187.28px;font:400 14.5px/20px 'Liberation Sans', sans-serif;color:#1f2328;letter-spacing:0.84px;-webkit-text-stroke:0.5px #1f2328;">nceder</span>
<span class="a t" style="left:372.2px;top:187.28px;font:400 14.5px/20px 'Liberation Sans', sans-serif;color:#59636e;letter-spacing:0.45px;">Created using Colaboratory</span>
<span class="a t" style="left:823.2px;top:186.5px;font:400 12.4px/20px 'Liberation Sans', sans-serif;color:#59636e;letter-spacing:0.27px;">a2000e0 · 10 months ago</span>
<svg class="a" style="left:988px;top:189px" width="16.4" height="16.4" viewBox="0 0 16 16" fill="#59636e"><path d="m.427 1.927 1.215 1.215a8.002 8.002 0 1 1-1.6 5.685.75.75 0 1 1 1.493-.154 6.5 6.5 0 1 0 1.18-4.458l1.358 1.358A.25.25 0 0 1 3.896 6H.25A.25.25 0 0 1 0 5.75V2.104a.25.25 0 0 1 .427-.177ZM7.75 4a.75.75 0 0 1 .75.75v2.992l2.028.812a.75.75 0 0 1-.557 1.392l-2.5-1A.751.751 0 0 1 7 8.25v-3.5A.75.75 0 0 1 7.75 4Z"/></svg>
<span class="a t" style="left:1008.2px;top:186.8px;font:400 12.4px/20px 'Liberation Sans', sans-serif;color:#1f2328;letter-spacing:0.69px;-webkit-text-stroke:0.5px #1f2328;">History</span>
<div class="a" style="left:273px;top:237px;width:796.5px;height:390px;border:1px solid #d1d9e0;border-radius:6px 6px 0 0;box-sizing:border-box;"></div>
<div class="a" style="left:274px;top:238px;width:794.5px;height:45px;background:#f6f8fa;border-radius:5px 5px 0 0;"></div>
<div class="a" style="left:274px;top:283px;width:794.5px;height:1px;background:#d1d9e0;"></div>
<div class="a" style="left:282px;top:245px;width:216px;height:30px;background:#e6eaef;border-radius:6px;"></div>
<div class="a" style="left:282px;top:245px;width:82px;height:30px;background:#fff;border:1px solid #8c959f;border-radius:6px;box-sizing:border-box;"></div>
<span class="a t" style="left:295.2px;top:250.58px;font:400 14.5px/20px 'Liberation Sans', sans-serif;color:#1f2328;letter-spacing:0.59px;-webkit-text-stroke:0.5px #1f2328;">Preview</span>
<span class="a t" style="left:377.2px;top:250.28px;font:400 14.5px/20px 'Liberation Sans', sans-serif;color:#1f2328;letter-spacing:0.43px;">Code</span>
<div class="a" style="left:427px;top:252px;width:1px;height:16px;background:#d1d9e0;"></div>
<span class="a t" style="left:441.2px;top:250.28px;font:400 14.5px/20px 'Liberation Sans', sans-serif;color:#1f2328;letter-spacing:0.46px;">Blame</span>
<span class="a t" style="left:506.5px;top:250.3px;font:400 12px/20px 'Liberation Mono', monospace;color:#59636e;letter-spacing:0.28px;">605 lines (605 loc) · 20.9 KB</span>
<div class="a" style="left:863px;top:245.5px;width:28.2px;height:29.2px;background:#f6f8fa;border:1px solid #d1d9e0;border-radius:6px;box-sizing:border-box;"></div>
<svg class="a" style="left:869px;top:251.6px" width="16.8" height="16.8" viewBox="0 0 16 16" fill="#3d444d"><path d="M7.998 15.035c-4.562 0-7.873-2.914-7.998-3.749V9.338c.085-.628.677-1.686 1.588-2.065.013-.07.024-.143.036-.218.029-.183.06-.384.126-.612-.201-.508-.254-1.084-.254-1.656 0-.87.128-1.769.693-2.484.579-.733 1.494-1.124 2.724-1.261 1.206-.134 2.262.034 2.944.765.05.053.096.108.139.165.044-.057.094-.112.143-.165.682-.731 1.738-.899 2.944-.765 1.23.137 2.145.528 2.724 1.261.566.715.693 1.614.693 2.484 0 .572-.053 1.148-.254 1.656.066.228.098.429.126.612.012.076.024.148.037.218.924.385 1.522 1.471 1.591 2.095v1.872c0 .766-3.351 3.795-8.002 3.795Zm0-1.485c2.28 0 4.584-1.11 5.002-1.433V7.862l-.023-.116c-.49.21-1.075.291-1.727.291-1.146 0-2.059-.327-2.71-.991A3.222 3.222 0 0 1 8 6.303a3.24 3.24 0 0 1-.544.743c-.65.664-1.563.991-2.71.991-.652 0-1.236-.081-1.727-.291l-.023.116v4.255c.419.323 2.722 1.433 5.002 1.433ZM6.762 2.83c-.193-.206-.637-.413-1.682-.297-1.019.113-1.479.404-1.713.7-.247.312-.369.789-.369 1.554 0 .793.129 1.171.308 1.371.162.181.519.379 1.442.379.853 0 1.339-.235 1.638-.54.315-.322.527-.827.617-1.553.117-.935-.037-1.395-.241-1.614Zm4.155-.297c-1.044-.116-1.488.091-1.681.297-.204.219-.359.679-.242 1.614.091.726.303 1.231.618 1.553.299.305.784.54 1.638.54.922 0 1.28-.198 1.442-.379.179-.2.308-.578.308-1.371 0-.765-.123-1.242-.37-1.554-.233-.296-.693-.587-1.713-.7ZM6.25 9.037a.75.75 0 0 1 .75.75v1.501a.75.75 0 0 1-1.5 0V9.787a.75.75 0 0 1 .75-.75Zm4.25.75v1.501a.75.75 0 0 1-1.5 0V9.787a.75.75 0 0 1 1.5 0Z"/></svg>
<div class="a" style="left:899px;top:245.5px;width:97.6px;height:29.2px;background:#f6f8fa;border:1px solid #d1d9e0;border-radius:6px;box-sizing:border-box;"></div>
<div class="a" style="left:940.5px;top:246.5px;width:1px;height:27.2px;background:#d1d9e0;"></div>
<div class="a" style="left:968px;top:246.5px;width:1px;height:27.2px;background:#d1d9e0;"></div>
<span class="a t" style="left:907.2px;top:250.7px;font:400 12.4px/20px 'Liberation Sans', sans-serif;color:#1f2328;letter-spacing:0.3px;-webkit-text-stroke:0.5px #1f2328;">Raw</span>
<svg class="a" style="left:946.8px;top:251.8px" width="16.4" height="16.4" viewBox="0 0 16 16" fill="#59636e"><path d="M0 6.75C0 5.784.784 5 1.75 5h1.5a.75.75 0 0 1 0 1.5h-1.5a.25.25 0 0 0-.25.25v7.5c0 .138.112.25.25.25h7.5a.25.25 0 0 0 .25-.25v-1.5a.75.75 0 0 1 1.5 0v1.5A1.75 1.75 0 0 1 9.25 16h-7.5A1.75 1.75 0 0 1 0 14.25ZM5 1.75C5 .784 5.784 0 6.75 0h7.5C15.216 0 16 .784 16 1.75v7.5A1.75 1.75 0 0 1 14.25 11h-7.5A1.75 1.75 0 0 1 5 9.25Zm1.75-.25a.25.25 0 0 0-.25.25v7.5c0 .138.112.25.25.25h7.5a.25.25 0 0 0 .25-.25v-7.5a.25.25 0 0 0-.25-.25Z"/></svg>
<svg class="a" style="left:974.3px;top:251.8px" width="16.4" height="16.4" viewBox="0 0 16 16" fill="#59636e"><path d="M2.75 14A1.75 1.75 0 0 1 1 12.25v-2.5a.75.75 0 0 1 1.5 0v2.5c0 .138.112.25.25.25h10.5a.25.25 0 0 0 .25-.25v-2.5a.75.75 0 0 1 1.5 0v2.5A1.75 1.75 0 0 1 13.25 14ZM7.25 7.689V2a.75.75 0 0 1 1.5 0v5.689l1.97-1.969a.749.749 0 1 1 1.06 1.06l-3.25 3.25a.749.749 0 0 1-1.06 0L4.22 6.78a.749.749 0 1 1 1.06-1.06l1.97 1.969Z"/></svg>
<div class="a" style="left:1005px;top:245.5px;width:56.6px;height:29.2px;background:#f6f8fa;border:1px solid #d1d9e0;border-radius:6px;box-sizing:border-box;"></div>
<div class="a" style="left:1033px;top:246.5px;width:1px;height:27.2px;background:#d1d9e0;"></div>
<svg class="a" style="left:1011.5px;top:251.8px" width="16.4" height="16.4" viewBox="0 0 16 16" fill="#59636e"><path d="M11.013 1.427a1.75 1.75 0 0 1 2.474 0l1.086 1.086a1.75 1.75 0 0 1 0 2.474l-8.61 8.61c-.21.21-.47.364-.756.445l-3.251.93a.75.75 0 0 1-.927-.928l.929-3.25c.081-.286.235-.547.445-.758l8.61-8.61Zm.176 4.823L9.75 4.81l-6.286 6.287a.253.253 0 0 0-.064.108l-.558 1.953 1.953-.558a.253.253 0 0 0 .108-.064Zm1.238-3.763a.25.25 0 0 0-.354 0L10.811 3.75l1.439 1.44 1.263-1.263a.25.25 0 0 0 0-.354Z"/></svg>
<svg class="a" style="left:1039.2px;top:251.8px" width="16.4" height="16.4" viewBox="0 0 16 16" fill="#59636e"><path d="m4.427 7.427 3.396 3.396a.25.25 0 0 0 .354 0l3.396-3.396A.25.25 0 0 0 11.396 7H4.604a.25.25 0 0 0-.177.427Z"/></svg>
<article>
<div class="a" style="left:389.5px;top:308.7px;width:120.5px;height:20px;background:linear-gradient(#0a8ad4,#0072b4);border-radius:3px;"></div>
<div class="a" style="left:389.5px;top:308.7px;width:30.5px;height:20px;background:linear-gradient(#5f5f5f,#4a4a4a);border-radius:3px 0 0 3px;"></div>
<svg class="a" style="left:394px;top:312.2px" width="21.5" height="12.9" viewBox="0 0 20 12"><g fill="none" stroke-width="3"><path d="M9 3.4A3.9 3.9 0 1 0 9 8.600" stroke="#f9ab00"/><circle cx="13.800" cy="6" r="3.900" stroke="#ee8a0a"/><path d="M10.600 3.200A3.900 3.900 0 0 1 17 3.200" stroke="#f9ab00"/></g></svg>
<span class="a t" style="left:424.4px;top:309.59px;font:400 11px/20px 'DejaVu Sans', 'Liberation Sans', sans-serif;color:#fff;letter-spacing:0.22px;">Open in Colab</span>
<span class="a t" style="left:389.7px;top:368.3px;font:400 28px/36px 'Liberation Sans', sans-serif;color:#1f2328;letter-spacing:1.05px;-webkit-text-stroke:1px #1f2328;">2.2 Getting started with Python and</span>
<span class="a t" style="left:389.7px;top:397.6px;font:400 28px/36px 'Liberation Sans', sans-serif;color:#1f2328;letter-spacing:0.99px;-webkit-text-stroke:1px #1f2328;">Colaboratory</span>
<span class="a t" style="left:390px;top:469.1px;font:400 28px/36px 'Liberation Sans', sans-serif;color:#1f2328;letter-spacing:1.08px;-webkit-text-stroke:1px #1f2328;">2.3 Hello world</span>
<span class="a t" style="left:321.3px;top:530.25px;font:400 13.45px/20px 'DejaVu Sans Mono', 'Liberation Mono', monospace;color:#b3b3b3;">In [ ]:</span>
<div class="a" style="left:384px;top:525px;width:660.5px;height:69.5px;background:#efefef;border:1px solid #d4d4d4;box-sizing:border-box;"></div>
<div class="a" style="left:391px;top:526px;width:648.5px;height:58px;background:#fafafa;"></div>
<div class="a" style="left:385px;top:526px;width:658px;height:58px;overflow:hidden">
<span class="a t" style="left:10.8px;top:9.35px;font:italic 400 13.45px/20px 'DejaVu Sans Mono', 'Liberation Mono', monospace;color:#408080;"># After running the first time, experiment with printing different strings (in quotes)</span>
<span class="a t" style="left:10.4px;top:27.55px;font:400 13.45px/20px 'DejaVu Sans Mono', 'Liberation Mono', monospace;color:#666;"><span style="color:#9a5a1c">print</span>(<span style="color:#1a7f1a">"Hello, World!"</span>)</span>
</div>
<div class="a" style="left:385px;top:584px;width:658.5px;height:9.5px;background:#f1f1f1;"></div>
<svg class="a" style="left:385px;top:584px" width="11" height="10" viewBox="0 0 11 10"><path d="M3.5 5 7.5 2V8Z" fill="#a3a3a3"/></svg>
<div class="a" style="left:396.8px;top:584.3px;width:592.2px;height:8.5px;background:#c1c1c1;"></div>
<span class="a t" style="left:380.1px;top:598.65px;font:400 13.45px/20px 'DejaVu Sans Mono', 'Liberation Mono', monospace;color:#1f2328;">Hello, World</span>
</article>
<div class="a" style="left:1028.3px;top:569.8px;width:41px;height:41.2px;background:#fff;border-radius:50%;box-shadow:0 1px 3px rgba(31,35,40,.12),0 6px 16px rgba(66,74,83,.14);border:1px solid #e4e8ec;box-sizing:border-box;"></div>
<svg class="a" style="left:1040.3px;top:583.2px" width="17" height="17" viewBox="0 0 16 16" fill="#424a53"><path d="M7.998 15.035c-4.562 0-7.873-2.914-7.998-3.749V9.338c.085-.628.677-1.686 1.588-2.065.013-.07.024-.143.036-.218.029-.183.06-.384.126-.612-.201-.508-.254-1.084-.254-1.656 0-.87.128-1.769.693-2.484.579-.733 1.494-1.124 2.724-1.261 1.206-.134 2.262.034 2.944.765.05.053.096.108.139.165.044-.057.094-.112.143-.165.682-.731 1.738-.899 2.944-.765 1.23.137 2.145.528 2.724 1.261.566.715.693 1.614.693 2.484 0 .572-.053 1.148-.254 1.656.066.228.098.429.126.612.012.076.024.148.037.218.924.385 1.522 1.471 1.591 2.095v1.872c0 .766-3.351 3.795-8.002 3.795Zm0-1.485c2.28 0 4.584-1.11 5.002-1.433V7.862l-.023-.116c-.49.21-1.075.291-1.727.291-1.146 0-2.059-.327-2.71-.991A3.222 3.222 0 0 1 8 6.303a3.24 3.24 0 0 1-.544.743c-.65.664-1.563.991-2.71.991-.652 0-1.236-.081-1.727-.291l-.023.116v4.255c.419.323 2.722 1.433 5.002 1.433ZM6.762 2.83c-.193-.206-.637-.413-1.682-.297-1.019.113-1.479.404-1.713.7-.247.312-.369.789-.369 1.554 0 .793.129 1.171.308 1.371.162.181.519.379 1.442.379.853 0 1.339-.235 1.638-.54.315-.322.527-.827.617-1.553.117-.935-.037-1.395-.241-1.614Zm4.155-.297c-1.044-.116-1.488.091-1.681.297-.204.219-.359.679-.242 1.614.091.726.303 1.231.618 1.553.299.305.784.54 1.638.54.922 0 1.28-.198 1.442-.379.179-.2.308-.578.308-1.371 0-.765-.123-1.242-.37-1.554-.233-.296-.693-.587-1.713-.7ZM6.25 9.037a.75.75 0 0 1 .75.75v1.501a.75.75 0 0 1-1.5 0V9.787a.75.75 0 0 1 .75-.75Zm4.25.75v1.501a.75.75 0 0 1-1.5 0V9.787a.75.75 0 0 1 1.5 0Z"/></svg>
</main>
<div class="a" style="left:0px;top:0px;width:1079px;height:7px;background:#fff;"></div>
<div class="a" style="left:1068px;top:0px;width:11px;height:58px;background:#fff;"></div>
<div class="a" style="left:1076px;top:58px;width:3px;height:50px;background:#fff;"></div>
<div class="a" style="left:0px;top:615px;width:1079px;height:20px;background:#fff;"></div>
</body></html>
